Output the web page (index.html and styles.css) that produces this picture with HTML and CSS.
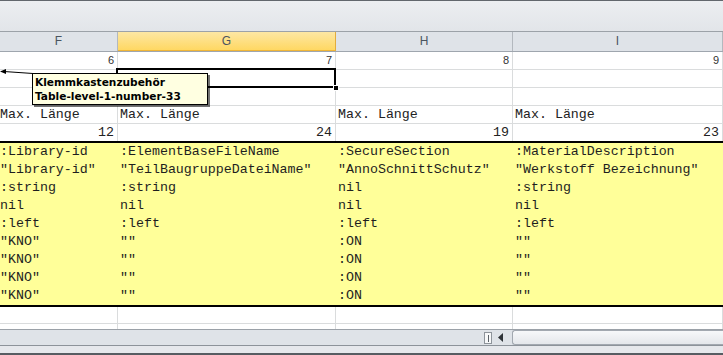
FILE: index.html
```html
<!DOCTYPE html>
<html lang="de">
<head>
    <meta charset="UTF-8">
    <title>Tabelle</title>
    <link rel="stylesheet" href="styles.css">
</head>
<body>
    <div class="excel">
        <div class="toolbar"></div>

        <div class="sheet">
            <div class="row col-head">
                <div class="col-label">F</div>
                <div class="col-label active">G</div>
                <div class="col-label">H</div>
                <div class="col-label">I</div>
            </div>

            <div class="row sans">
                <div class="cell num">6</div>
                <div class="cell num">7</div>
                <div class="cell num">8</div>
                <div class="cell num">9</div>
            </div>
            <div class="row">
                <div class="cell"></div><div class="cell"></div><div class="cell"></div><div class="cell"></div>
            </div>
            <div class="row">
                <div class="cell"></div><div class="cell"></div><div class="cell"></div><div class="cell"></div>
            </div>
            <div class="row mono">
                <div class="cell">Max. Länge</div>
                <div class="cell">Max. Länge</div>
                <div class="cell">Max. Länge</div>
                <div class="cell">Max. Länge</div>
            </div>
            <div class="row mono open">
                <div class="cell num">12</div>
                <div class="cell num">24</div>
                <div class="cell num">19</div>
                <div class="cell num">23</div>
            </div>

            <div class="block">
                <div class="row mono filled">
                    <div class="cell">:Library-id</div>
                    <div class="cell">:ElementBaseFileName</div>
                    <div class="cell">:SecureSection</div>
                    <div class="cell">:MaterialDescription</div>
                </div>
                <div class="row mono filled">
                    <div class="cell">"Library-id"</div>
                    <div class="cell">"TeilBaugruppeDateiName"</div>
                    <div class="cell">"AnnoSchnittSchutz"</div>
                    <div class="cell">"Werkstoff Bezeichnung"</div>
                </div>
                <div class="row mono filled">
                    <div class="cell">:string</div>
                    <div class="cell">:string</div>
                    <div class="cell">nil</div>
                    <div class="cell">:string</div>
                </div>
                <div class="row mono filled">
                    <div class="cell">nil</div>
                    <div class="cell">nil</div>
                    <div class="cell">nil</div>
                    <div class="cell">nil</div>
                </div>
                <div class="row mono filled">
                    <div class="cell">:left</div>
                    <div class="cell">:left</div>
                    <div class="cell">:left</div>
                    <div class="cell">:left</div>
                </div>
                <div class="row mono filled">
                    <div class="cell">"KNO"</div>
                    <div class="cell">""</div>
                    <div class="cell">:ON</div>
                    <div class="cell">""</div>
                </div>
                <div class="row mono filled">
                    <div class="cell">"KNO"</div>
                    <div class="cell">""</div>
                    <div class="cell">:ON</div>
                    <div class="cell">""</div>
                </div>
                <div class="row mono filled">
                    <div class="cell">"KNO"</div>
                    <div class="cell">""</div>
                    <div class="cell">:ON</div>
                    <div class="cell">""</div>
                </div>
                <div class="row mono filled">
                    <div class="cell">"KNO"</div>
                    <div class="cell">""</div>
                    <div class="cell">:ON</div>
                    <div class="cell">""</div>
                </div>
            </div>

            <div class="row after">
                <div class="cell"></div><div class="cell"></div><div class="cell"></div><div class="cell"></div>
            </div>
            <div class="row partial">
                <div class="cell"></div><div class="cell"></div><div class="cell"></div><div class="cell"></div>
            </div>

            <!-- active cell G, second row -->
            <div class="selection"><span class="fill-handle"></span></div>

            <svg class="comment-arrow" width="34" height="6" viewBox="0 0 34 6">
                <line x1="4" y1="2.5" x2="33" y2="4.5" stroke="#000" stroke-width="1"/>
                <polygon points="0,2.5 6,0 6,5" fill="#000"/>
            </svg>
            <div class="comment">
                <p>Klemmkastenzubehör</p>
                <p>Table-level-1-number-33</p>
            </div>
        </div>

        <div class="scroll-area">
            <div class="tabs"></div>
            <div class="split-box"><span></span></div>
            <svg class="scroll-left" width="9" height="11" viewBox="0 0 9 11">
                <polygon points="2,5.5 7,1 7,10" fill="#2e3338"/>
            </svg>
            <div class="scroll-thumb"></div>
        </div>
        <div class="status-line"></div>
    </div>
</body>
</html>
```

FILE: styles.css
```css
* {
    box-sizing: border-box;
    margin: 0;
    padding: 0;
}

body {
    width: 723px;
    height: 355px;
    overflow: hidden;
    background: #fff;
    font-family: 'Liberation Sans', Arial, sans-serif;
}

.excel {
    width: 723px;
    height: 355px;
    display: flex;
    flex-direction: column;
}

.toolbar {
    height: 31px;
    border-top: 1px solid #62676d;
    background: linear-gradient(#eceef1, #e2e5e9);
}

.sheet {
    position: relative;
    height: 298px;
    overflow: hidden;
}

.row {
    display: grid;
    grid-template-columns: 118px 218px 177px 210px;
    height: 18px;
}

.cell {
    height: 18px;
    border-right: 1px solid #dadcdd;
    border-bottom: 1px solid #dadcdd;
    padding: 0 2px;
    overflow: hidden;
    white-space: nowrap;
    color: #222;
}

.cell:first-child {
    padding-left: 0;
}

.num {
    text-align: right;
    padding-right: 3px;
}

/* column letters */

.col-head {
    height: 21px;
    border-top: 1px solid #9ca2a8;
    border-bottom: 1px solid #9fa6ae;
    background: #dfe3e8;
}

.col-label {
    height: 19px;
    border-right: 1px solid #b3b8be;
    font-size: 12px;
    line-height: 19px;
    text-align: center;
    color: #4a5460;
}

.col-label.active {
    background: linear-gradient(#fde7a4, #ffd75f);
    border-right-color: #e3ad3c;
    box-shadow: inset 0 -1px 0 #efb536;
}

/* cell fonts */

.sans .cell {
    font-size: 11px;
    line-height: 17px;
    color: #333;
}

.mono .cell {
    font-family: 'Liberation Mono', 'Courier New', monospace;
    font-size: 13.3px;
    line-height: 17px;
}

.open {
    height: 17px;
}

.open .cell {
    height: 17px;
    border-bottom: none;
}

/* yellow block */

.block {
    border-top: 2px solid #000;
    border-bottom: 2px solid #000;
    background: #ffff99;
}

.filled .cell {
    border: none;
    line-height: 18px;
    color: #1e1e1e;
}

.after {
    height: 17px;
}

.after .cell {
    height: 17px;
}

.partial {
    height: 5px;
}

.partial .cell {
    height: 5px;
    border-bottom: none;
}

/* overlays */

.selection {
    position: absolute;
    left: 116px;
    top: 37px;
    width: 220px;
    height: 20px;
    border: 2px solid #000;
}

.fill-handle {
    position: absolute;
    right: -5px;
    bottom: -5px;
    width: 6px;
    height: 6px;
    background: #000;
    border: 1px solid #fff;
}

.comment-arrow {
    position: absolute;
    left: 0;
    top: 38px;
}

.comment {
    position: absolute;
    left: 32px;
    top: 42px;
    width: 176px;
    height: 32px;
    padding: 1px 2px;
    background: #ffffe1;
    border: 1px solid #000;
    box-shadow: 2px 2px 0 rgba(0, 0, 0, 0.55);
    font-family: 'DejaVu Sans', Verdana, sans-serif;
    font-size: 10.6px;
    font-weight: 700;
    line-height: 14px;
    color: #000;
}

/* bottom bar */

.scroll-area {
    display: flex;
    align-items: center;
    height: 17px;
    border-top: 1px solid #9ba1a8;
    border-bottom: 1px solid #8d939a;
    background: #dfe3e8;
}

.tabs {
    width: 484px;
}

.split-box {
    display: flex;
    justify-content: center;
    width: 8px;
    height: 12px;
    background: #f7f8f9;
    border: 1px solid #8e949b;
    padding-top: 2px;
}

.split-box span {
    width: 1px;
    height: 7px;
    background: #5b6168;
}

.scroll-left {
    margin: 0 7px 0 4px;
}

.scroll-thumb {
    flex: 1;
    height: 15px;
    border: 1px solid #a2a8b0;
    border-right: none;
    border-radius: 3px 0 0 3px;
    background: linear-gradient(#f7f8fa, #e4e7eb);
}

.status-line {
    height: 9px;
    background: #e6e8ec;
    border-bottom: 2px solid #575c62;
}
```
